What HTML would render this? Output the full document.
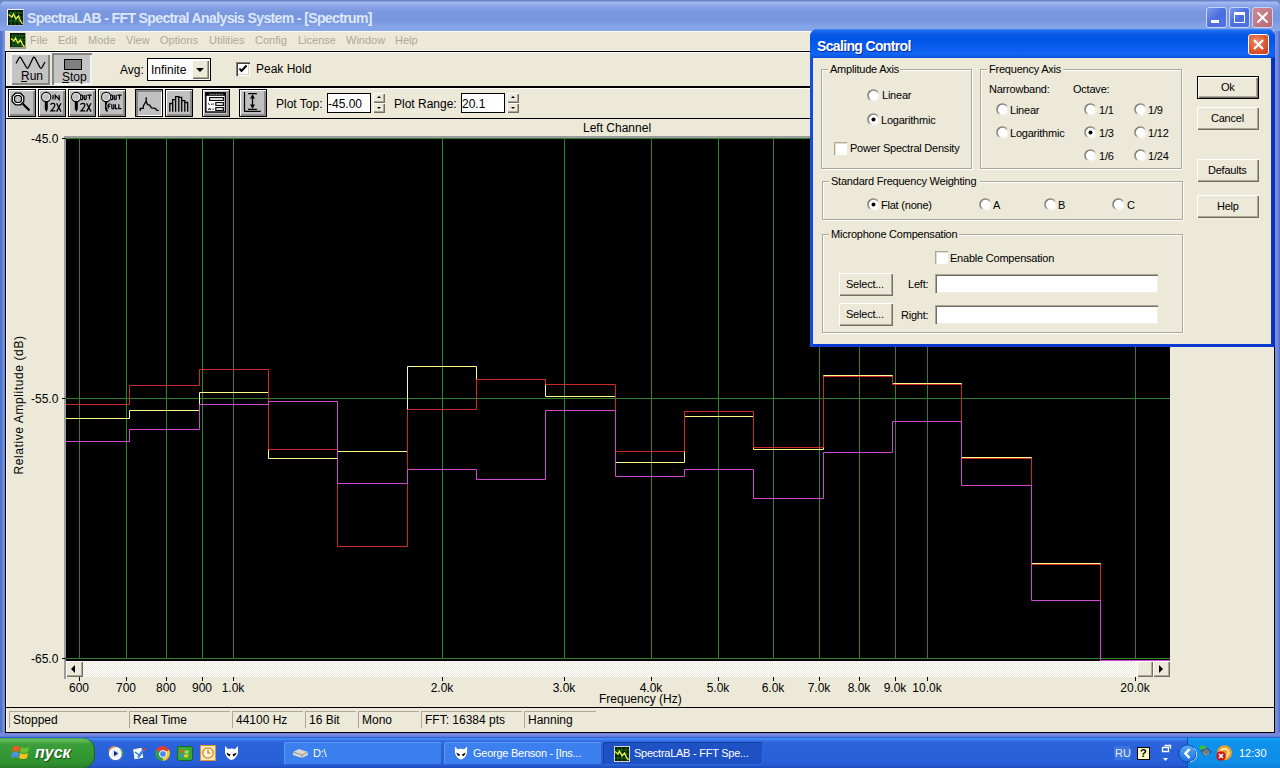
<!DOCTYPE html>
<html><head><meta charset="utf-8">
<style>
*{margin:0;padding:0;box-sizing:border-box}
html,body{width:1280px;height:768px;overflow:hidden;background:#6688c4;font-family:"Liberation Sans",sans-serif;font-size:11px;color:#000}
.a{position:absolute}
.t{position:absolute;white-space:nowrap;line-height:1}
#frame{left:0;top:0;width:1280px;height:738px;background:#7d9ce0;border-radius:7px 7px 0 0}
#title{left:0;top:0;width:1280px;height:31px;border-radius:7px 7px 0 0;background:linear-gradient(#6a82c8 0,#6a82c8 1px,#a4baf0 2px,#98b0ee 4px,#8aa4e8 6px,#7a98e0 12px,#7896de 20px,#84a2e6 26px,#88a8ea 31px)}
#client{left:5px;top:31px;width:1269px;height:701px;background:#ece9d8}
.tb{position:absolute;width:21px;height:21px;border-radius:3px;border:1px solid #c8d4f8;background:linear-gradient(135deg,#7c98ec,#4a6ee0 50%,#5274e0)}
.menu{color:#aca899;font-size:11px;top:35px}
.btn{position:absolute;background:#c0c0c0;border:1px solid #000;box-shadow:inset 1px 1px 0 #fff,inset -2px -2px 0 #8a8a8a}
.face{position:absolute;background:#c6c6c6;box-shadow:inset 1px 1px 0 #f4f4f4,inset -2px -2px 0 #8c8c8c}
.hl{position:absolute;height:1px}
.vl{position:absolute;width:1px}
.d{font-size:11px;letter-spacing:-0.22px}
.tk{font-size:11px;color:#fff;letter-spacing:-0.25px}
</style></head><body>
<div id="frame" class="a"></div>
<div id="title" class="a"></div>
<!-- app icon -->
<svg class="a" style="left:7px;top:9px" width="17" height="17" viewBox="0 0 17 17">
<rect x="0.5" y="0.5" width="16" height="16" fill="#0a1a08" stroke="#a8b4d0"/><path d="M0.5 16.5V0.5H16.5" stroke="#f0f4fc" fill="none"/>
<path d="M4 2V16M8 2V16M12 2V16M2 4H16M2 8H16M2 12H16" stroke="#1a8a1a" stroke-width="0.7"/>
<path d="M1.5 5.5L5 8L6.5 5L9 10L11.5 7L13.5 12L15.5 15" stroke="#e4f040" stroke-width="1.3" fill="none"/>
</svg>
<div class="t" style="left:27px;top:11px;font-size:14px;font-weight:bold;color:#dfe8fa;letter-spacing:-0.62px">SpectraLAB - FFT Spectral Analysis System - [Spectrum]</div>
<div class="tb" style="left:1206px;top:7px"></div>
<div class="a" style="left:1211px;top:20px;width:8px;height:3px;background:#fff"></div>
<div class="tb" style="left:1229px;top:7px"></div>
<div class="a" style="left:1234px;top:12px;width:11px;height:11px;border:1px solid #fff;border-top-width:3px"></div>
<div class="tb" style="left:1252px;top:7px;background:linear-gradient(135deg,#d08890,#b86878)"></div>
<svg class="a" style="left:1252px;top:7px" width="21" height="21" viewBox="0 0 21 21"><path d="M5.5 5.5L15.5 15.5M15.5 5.5L5.5 15.5" stroke="#fff" stroke-width="2"/></svg>
<div class="a" style="left:0;top:31px;width:5px;height:707px;background:linear-gradient(90deg,#4a76c8 0,#4c78cc 2px,#7a8ae0 3px,#7c8ce0 5px)"></div>
<div class="a" style="left:1275px;top:31px;width:5px;height:707px;background:linear-gradient(90deg,#7c8ce0 0,#7486dc 3px,#4a76c8 4px,#4a76c8 5px)"></div>
<div class="a" style="left:0;top:732px;width:1280px;height:6px;background:linear-gradient(#6c80d8,#7a8ae0 3px,#4a6ac0 6px)"></div>
<div id="client" class="a"></div>
<div class="a" style="left:5px;top:51px;width:1px;height:682px;background:#000"></div>
<div class="a" style="left:6px;top:52px;width:1px;height:680px;background:#fbfbf6"></div>
<div class="a" style="left:1274px;top:51px;width:1px;height:682px;background:#000"></div>

<!-- menu bar -->
<div class="a" style="left:5px;top:31px;width:1269px;height:1px;background:#fbfbf7"></div>
<svg class="a" style="left:10px;top:33px" width="16" height="16" viewBox="0 0 16 16">
<rect x="0" y="0" width="16" height="16" fill="#9c9c94"/>
<rect x="0" y="0" width="15" height="14" fill="#0a1a08"/>
<path d="M3 1V14M6 1V14M9 1V14M12 1V14M1 3H15M1 6H15M1 9H15M1 12H15" stroke="#1a8a1a" stroke-width="0.7"/>
<path d="M1 5.5L4 8L5.5 5L8 10L10.5 7L12.5 11.5L14.5 14" stroke="#e4f040" stroke-width="1.3" fill="none"/>
</svg>
<div class="t menu" style="left:30px">File</div>
<div class="t menu" style="left:58px">Edit</div>
<div class="t menu" style="left:88px">Mode</div>
<div class="t menu" style="left:126px">View</div>
<div class="t menu" style="left:160px">Options</div>
<div class="t menu" style="left:209px">Utilities</div>
<div class="t menu" style="left:255px">Config</div>
<div class="t menu" style="left:298px">License</div>
<div class="t menu" style="left:346px">Window</div>
<div class="t menu" style="left:395px">Help</div>
<!-- toolbar 1 -->
<div class="a" style="left:5px;top:50px;width:1269px;height:1px;background:#f4f4ee"></div>
<div class="a" style="left:5px;top:51px;width:1269px;height:1px;background:#000"></div>

<div class="a" style="left:6px;top:52px;width:1268px;height:1px;background:#fff"></div>
<div class="a" style="left:6px;top:52px;width:1px;height:34px;background:#fff"></div>
<div class="a" style="left:10px;top:53px;width:40px;height:32px;background:#c4c4c4;box-shadow:inset 2px 2px 0 #f2f2ee,inset -2px -2px 0 #858585"></div>
<svg class="a" style="left:10px;top:53px" width="40" height="32" viewBox="0 0 40 32">
<path d="M6 10.5L9 5Q10 3.5 11 5L16.5 14.5Q17.5 16 18.5 14.5L23 5Q24 3.5 25 5L30 14.5Q31 16 32 14.5L35 9" stroke="#000" stroke-width="1.3" fill="none"/>
</svg>
<div class="t" style="left:21px;top:70px;font-size:12px">Run</div>
<div class="a" style="left:21px;top:81px;width:6px;height:1px;background:#000"></div>
<div class="a" style="left:52px;top:53px;width:40px;height:32px;background:#c4c4c4;box-shadow:inset 2px 2px 0 #858585,inset -2px -2px 0 #f2f2ee"></div>
<div class="a" style="left:64px;top:59px;width:18px;height:11px;background:#808080;border:1px solid #000"></div>
<div class="t" style="left:62px;top:71px;font-size:12px">Stop</div>
<div class="a" style="left:62px;top:82px;width:7px;height:1px;background:#000"></div>
<div class="t" style="left:120px;top:64px;font-size:12px">Avg:</div>
<div class="a" style="left:147px;top:58px;width:64px;height:23px;background:#fff;border:1px solid #000"></div>
<div class="t" style="left:151px;top:63.5px;font-size:12px">Infinite</div>
<div class="a" style="left:192px;top:60px;width:17px;height:19px;background:#ece9d8;box-shadow:inset 1px 1px 0 #fff,inset -1px -1px 0 #716f64,inset -2px -2px 0 #aca899"></div>
<div class="a" style="left:196px;top:68px;width:0;height:0;border-left:4px solid transparent;border-right:4px solid transparent;border-top:4px solid #000"></div>
<div class="a" style="left:236px;top:62px;width:14px;height:14px;background:#fff;box-shadow:inset 1px 1px 0 #808080,inset 2px 2px 0 #404040,inset -1px -1px 0 #fff,inset -2px -2px 0 #d4d0c8"></div>
<svg class="a" style="left:236px;top:62px" width="14" height="14" viewBox="0 0 14 14"><path d="M3.5 6.5L5.5 9L10.5 3.5" stroke="#000" stroke-width="2" fill="none"/></svg>
<div class="t" style="left:256px;top:63px;font-size:12px">Peak Hold</div>
<!-- toolbar 2 -->
<div class="a" style="left:5px;top:86px;width:1269px;height:2px;background:#000"></div>
<div class="a" style="left:5px;top:118px;width:1269px;height:1px;background:#000"></div>
<div class="a" style="left:6px;top:88px;width:1268px;height:1px;background:#fff"></div>
<div class="a" style="left:6px;top:88px;width:1px;height:30px;background:#fff"></div>

<!-- toolbar 2 buttons -->
<div class="btn" style="left:8px;top:89px;width:28px;height:28px"></div>
<svg class="a" style="left:8px;top:89px" width="28" height="28" viewBox="0 0 28 28">
<path d="M7.5 4.2H12.5L15.8 7.5V12.5L12.5 15.8H7.5L4.2 12.5V7.5Z" fill="#fff" stroke="#000" stroke-width="1.3"/>
<path d="M8.3 6.5H11.7L13.5 8.3V11.7L11.7 13.5H8.3L6.5 11.7V8.3Z" fill="#c0c0c0" stroke="#000" stroke-width="1.2"/>
<path d="M14.5 14.5L21.5 21.5" stroke="#000" stroke-width="2.2"/></svg>
<div class="btn" style="left:38px;top:89px;width:28px;height:28px"></div>
<svg class="a" style="left:38px;top:89px" width="28" height="28" viewBox="0 0 28 28">
<circle cx="8.2" cy="8" r="3.9" fill="#c0c0c0" stroke="#fff" stroke-width="1.3"/><circle cx="8.2" cy="8" r="4.6" fill="none" stroke="#000" stroke-width="1.1"/>
<path d="M6.8 13H9.8V20L8.3 23L6.8 20Z" fill="#000"/>
<path d="M15 6V10.6M17.2 10.6V6L21.2 10.6V6" stroke="#000" stroke-width="1.2" fill="none"/>
<path d="M12.6 15.8Q13 14.4 14.8 14.4Q16.8 14.4 16.8 16.2Q16.8 17.6 13 21.9H17.4M18.6 14.2L23 22.6M23 14.2L18.6 22.6" stroke="#000" stroke-width="1.3" fill="none"/></svg>
<div class="btn" style="left:68px;top:89px;width:28px;height:28px"></div>
<svg class="a" style="left:68px;top:89px" width="28" height="28" viewBox="0 0 28 28">
<circle cx="8.2" cy="8" r="3.9" fill="#c0c0c0" stroke="#fff" stroke-width="1.3"/><circle cx="8.2" cy="8" r="4.6" fill="none" stroke="#000" stroke-width="1.1"/>
<path d="M6.8 13H9.8V20L8.3 23L6.8 20Z" fill="#000"/>
<path d="M12.6 6.2H13.8Q14.8 6.2 14.8 8.4Q14.8 10.6 13.8 10.6H12.6M16.2 6V9.8Q16.2 10.6 17.2 10.6Q18.2 10.6 18.2 9.8V6M19.4 6.2H23.6M21.5 6.2V10.6" stroke="#000" stroke-width="1.2" fill="none"/>
<path d="M12.6 15.8Q13 14.4 14.8 14.4Q16.8 14.4 16.8 16.2Q16.8 17.6 13 21.9H17.4M18.6 14.2L23 22.6M23 14.2L18.6 22.6" stroke="#000" stroke-width="1.3" fill="none"/></svg>
<div class="btn" style="left:98px;top:89px;width:28px;height:28px"></div>
<svg class="a" style="left:98px;top:89px" width="28" height="28" viewBox="0 0 28 28">
<circle cx="8.2" cy="8" r="3.9" fill="#c0c0c0" stroke="#fff" stroke-width="1.3"/><circle cx="8.2" cy="8" r="4.6" fill="none" stroke="#000" stroke-width="1.1"/>
<path d="M7 13H9.5L8.6 15.5Q8 17 9 19.5L10 22.5H8L7 19.5Z" fill="#000"/>
<path d="M12.6 6.2H13.8Q14.8 6.2 14.8 8.4Q14.8 10.6 13.8 10.6H12.6M16.2 6V9.8Q16.2 10.6 17.2 10.6Q18.2 10.6 18.2 9.8V6M19.4 6.2H23.6M21.5 6.2V10.6" stroke="#000" stroke-width="1.2" fill="none"/>
<path d="M10.2 15.2H12.6M10.2 15.2V19.8M10.2 17.3H12M13.8 15.2V19Q13.8 19.8 14.8 19.8Q15.8 19.8 15.8 19V15.2M17.4 15.2V19.6H19.6M20.8 15.2V19.6H23.4" stroke="#000" stroke-width="1.2" fill="none"/></svg>
<div class="a" style="left:135px;top:89px;width:28px;height:28px;background:#c0c0c0;border:1px solid #000;box-shadow:inset 2px 2px 0 #858585,inset -1px -1px 0 #fff"></div>
<svg class="a" style="left:135px;top:89px" width="28" height="28" viewBox="0 0 28 28">
<path d="M5.3 22V19.3H8.2V17.4L9.6 14.5L11.1 12.6L11.3 8.2M11.3 12.6L12.5 15.5L14.9 16.4L16.4 18.9L20.3 19.3L21.7 21.3H23.7" stroke="#000" stroke-width="1.3" fill="none"/></svg>
<div class="btn" style="left:165px;top:89px;width:28px;height:28px"></div>
<svg class="a" style="left:165px;top:89px" width="28" height="28" viewBox="0 0 28 28">
<path d="M4.8 22.7V14.5M7.7 22.7V10.6M10.6 22.7V7.7M13.8 22.7V7.7M16.7 22.7V8.4M19.8 22.7V11.6M22.7 22.7V13.5M4.2 14.5H8.3M7.1000000000000005 10.6H11.2M10.0 7.7H14.4M13.200000000000001 8.4H17.3M16.099999999999998 11.6H20.400000000000002M19.2 13.5H23.3" stroke="#000" stroke-width="1.3" fill="none"/></svg>
<div class="btn" style="left:202px;top:89px;width:28px;height:28px"></div>
<svg class="a" style="left:202px;top:89px" width="28" height="28" viewBox="0 0 28 28">
<rect x="3.8" y="3.8" width="19.6" height="19.2" fill="#fff" stroke="#000" stroke-width="1.4"/>
<rect x="3.8" y="3.8" width="19.6" height="3" fill="#000"/>
<path d="M7.5 5.3H21" stroke="#fff" stroke-width="0.8" stroke-dasharray="1 0.6"/>
<rect x="7.6" y="8.6" width="13.8" height="2.8" fill="none" stroke="#000" stroke-width="1.1"/>
<rect x="13.8" y="13.6" width="7.6" height="2.8" fill="none" stroke="#000" stroke-width="1.1"/>
<rect x="13.8" y="18.6" width="7.6" height="2.8" fill="none" stroke="#000" stroke-width="1.1"/>
<path d="M6 14.5L7.5 15.5M9 15.2H10.5M11.5 14.5V15.5M6 20.5L7.5 19.5L9 20.5M11 19.5V20.8" stroke="#000" stroke-width="1"/></svg>
<div class="btn" style="left:239px;top:89px;width:28px;height:28px"></div>
<svg class="a" style="left:239px;top:89px" width="28" height="28" viewBox="0 0 28 28">
<path d="M5.5 3V22.4H21.8" stroke="#000" stroke-width="1.2" fill="none"/>
<path d="M9.1 4.6H17.9M9.1 20.3H17.9M13.5 6V19" stroke="#000" stroke-width="1.2" fill="none"/>
<path d="M11 9.5L13.5 5.5L16 9.5ZM11 15.5L13.5 19.5L16 15.5Z" fill="#000"/></svg>
<div class="t" style="left:276px;top:98px;font-size:12px">Plot Top:</div>
<div class="a" style="left:327px;top:93px;width:44px;height:20px;background:#fff;border:1px solid #000"></div>
<div class="t" style="left:328px;top:98px;font-size:12px">-45.00</div>
<div class="a" style="left:373px;top:93px;width:12px;height:10px;background:#ece9d8;box-shadow:inset 1px 1px 0 #fff,inset -1px -1px 0 #716f64,inset -2px -2px 0 #aca899"></div>
<div class="a" style="left:373px;top:103px;width:12px;height:10px;background:#ece9d8;box-shadow:inset 1px 1px 0 #fff,inset -1px -1px 0 #716f64,inset -2px -2px 0 #aca899"></div>
<div class="a" style="left:377px;top:96px;border-left:2px solid transparent;border-right:2px solid transparent;border-bottom:2px solid #000"></div>
<div class="a" style="left:377px;top:107px;border-left:2px solid transparent;border-right:2px solid transparent;border-top:2px solid #000"></div>
<div class="t" style="left:394px;top:98px;font-size:12px">Plot Range:</div>
<div class="a" style="left:461px;top:93px;width:44px;height:20px;background:#fff;border:1px solid #000"></div>
<div class="t" style="left:462px;top:98px;font-size:12px">20.1</div>
<div class="a" style="left:507px;top:93px;width:12px;height:10px;background:#ece9d8;box-shadow:inset 1px 1px 0 #fff,inset -1px -1px 0 #716f64,inset -2px -2px 0 #aca899"></div>
<div class="a" style="left:507px;top:103px;width:12px;height:10px;background:#ece9d8;box-shadow:inset 1px 1px 0 #fff,inset -1px -1px 0 #716f64,inset -2px -2px 0 #aca899"></div>
<div class="a" style="left:511px;top:96px;border-left:2px solid transparent;border-right:2px solid transparent;border-bottom:2px solid #000"></div>
<div class="a" style="left:511px;top:107px;border-left:2px solid transparent;border-right:2px solid transparent;border-top:2px solid #000"></div>

<!-- plot -->
<div class="t" style="left:583px;top:122px;font-size:12px">Left Channel</div>
<div class="a" style="left:64px;top:136px;width:1106px;height:2px;background:#9c9c9c"></div>
<div class="a" style="left:64px;top:136px;width:2px;height:543px;background:#9c9c9c"></div>
<div class="a" style="left:66px;top:138px;width:1104px;height:523px;background:#000"></div>
<svg class="a" style="left:0;top:0" width="1280" height="768">
<path d="M79.5 138V659M126.5 138V659M166.5 138V659M202.5 138V659M233.5 138V659M442.5 138V659M564.5 138V659M651.5 138V659M718.5 138V659M773.5 138V659M819.5 138V659M859.5 138V659M895.5 138V659M927.5 138V659M1135.5 138V659M66 138.5H1170M66 398.5H1170M66 658.5H1170" stroke="#2c8230" stroke-width="1" fill="none"/>
<path d="M62 138.5H66M62 398.5H66M62 658.5H66" stroke="#000" stroke-width="1"/>
<path d="M66 418.5H129.5V410.5H199.5V392.5H268.5V458.5H337.5V451.5H407.5V366.5H476.5V379.5H545.5V396.5H615.5V462.5H684.5V416.5H753.5V449.5H823.5V375.5H892.5V383.5H961.5V457.5H1031.5V563.5H1100.5V660.5H1170" stroke="#ffff88" stroke-width="1" fill="none"/>
<path d="M66 404.5H129.5V385.5H199.5V369.5H268.5V449.5H337.5V546.5H407.5V409.5H476.5V379.5H545.5V384.5H615.5V451.5H684.5V411.5H753.5V447.5H823.5V376.5H892.5V384.5H961.5V458.5H1031.5V564.5H1100.5V660.5H1170" stroke="#cc2a26" stroke-width="1" fill="none"/>
<path d="M66 441.5H129.5V429.5H199.5V404.5H268.5V401.5H337.5V483.5H407.5V469.5H476.5V479.5H545.5V410.5H615.5V476.5H684.5V469.5H753.5V498.5H823.5V452.5H892.5V421.5H961.5V485.5H1031.5V600.5H1100.5V660.5H1170" stroke="#d048d0" stroke-width="1" fill="none"/>
</svg>

<!-- axes -->
<div class="t" style="left:31px;top:133px;font-size:12px">-45.0</div>
<div class="t" style="left:31px;top:393px;font-size:12px">-55.0</div>
<div class="t" style="left:31px;top:653px;font-size:12px">-65.0</div>
<div class="t" style="left:19px;top:405px;font-size:12px;letter-spacing:0.6px;transform:translate(-50%,-50%) rotate(-90deg);transform-origin:center">Relative Amplitude (dB)</div>
<div class="a" style="left:66px;top:661px;width:1104px;height:16px;background:repeating-conic-gradient(#fff 0 25%,#ebe9de 0 50%) 0 0/2px 2px"></div>
<div class="a" style="left:66px;top:661px;width:17px;height:16px;background:#ece9d8;box-shadow:inset 1px 1px 0 #fff,inset -1px -1px 0 #716f64,inset -2px -2px 0 #aca899"></div>
<div class="a" style="left:71px;top:665px;border-top:4px solid transparent;border-bottom:4px solid transparent;border-right:4px solid #000"></div>
<div class="a" style="left:1137px;top:661px;width:16px;height:16px;background:#ece9d8;box-shadow:inset 1px 1px 0 #fff,inset -1px -1px 0 #716f64,inset -2px -2px 0 #aca899"></div>
<div class="a" style="left:1153px;top:661px;width:17px;height:16px;background:#ece9d8;box-shadow:inset 1px 1px 0 #fff,inset -1px -1px 0 #716f64,inset -2px -2px 0 #aca899"></div>
<div class="a" style="left:1159px;top:665px;border-top:4px solid transparent;border-bottom:4px solid transparent;border-left:4px solid #000"></div>
<svg class="a" style="left:0;top:0" width="1280" height="768"><path d="M79.5 677V681M126.5 677V681M166.5 677V681M202.5 677V681M233.5 677V681M442.5 677V681M564.5 677V681M651.5 677V681M718.5 677V681M773.5 677V681M819.5 677V681M859.5 677V681M895.5 677V681M927.5 677V681M1135.5 677V681" stroke="#000" stroke-width="1"/></svg>
<div class="t" style="left:79px;top:682px;font-size:12px;transform:translateX(-50%)">600</div>
<div class="t" style="left:126px;top:682px;font-size:12px;transform:translateX(-50%)">700</div>
<div class="t" style="left:166px;top:682px;font-size:12px;transform:translateX(-50%)">800</div>
<div class="t" style="left:202px;top:682px;font-size:12px;transform:translateX(-50%)">900</div>
<div class="t" style="left:233px;top:682px;font-size:12px;transform:translateX(-50%)">1.0k</div>
<div class="t" style="left:442px;top:682px;font-size:12px;transform:translateX(-50%)">2.0k</div>
<div class="t" style="left:564px;top:682px;font-size:12px;transform:translateX(-50%)">3.0k</div>
<div class="t" style="left:651px;top:682px;font-size:12px;transform:translateX(-50%)">4.0k</div>
<div class="t" style="left:718px;top:682px;font-size:12px;transform:translateX(-50%)">5.0k</div>
<div class="t" style="left:773px;top:682px;font-size:12px;transform:translateX(-50%)">6.0k</div>
<div class="t" style="left:819px;top:682px;font-size:12px;transform:translateX(-50%)">7.0k</div>
<div class="t" style="left:859px;top:682px;font-size:12px;transform:translateX(-50%)">8.0k</div>
<div class="t" style="left:895px;top:682px;font-size:12px;transform:translateX(-50%)">9.0k</div>
<div class="t" style="left:927px;top:682px;font-size:12px;transform:translateX(-50%)">10.0k</div>
<div class="t" style="left:1135px;top:682px;font-size:12px;transform:translateX(-50%)">20.0k</div>
<div class="t" style="left:599px;top:693px;font-size:12px">Frequency (Hz)</div>
<!-- status -->
<div class="a" style="left:5px;top:707px;width:1269px;height:1px;background:#000"></div>
<div class="a" style="left:5px;top:732px;width:1269px;height:1px;background:#000"></div>
<div class="a" style="left:5px;top:707px;width:1px;height:26px;background:#000"></div>
<div class="a" style="left:9px;top:711px;width:118px;height:17px;border-left:1px solid #aca899;border-top:1px solid #aca899"></div>
<div class="t" style="left:13px;top:714px;font-size:12px">Stopped</div>
<div class="a" style="left:129px;top:711px;width:101px;height:17px;border-left:1px solid #aca899;border-top:1px solid #aca899"></div>
<div class="t" style="left:133px;top:714px;font-size:12px">Real Time</div>
<div class="a" style="left:232px;top:711px;width:71px;height:17px;border-left:1px solid #aca899;border-top:1px solid #aca899"></div>
<div class="t" style="left:236px;top:714px;font-size:12px">44100 Hz</div>
<div class="a" style="left:305px;top:711px;width:51px;height:17px;border-left:1px solid #aca899;border-top:1px solid #aca899"></div>
<div class="t" style="left:309px;top:714px;font-size:12px">16 Bit</div>
<div class="a" style="left:358px;top:711px;width:61px;height:17px;border-left:1px solid #aca899;border-top:1px solid #aca899"></div>
<div class="t" style="left:362px;top:714px;font-size:12px">Mono</div>
<div class="a" style="left:421px;top:711px;width:101px;height:17px;border-left:1px solid #aca899;border-top:1px solid #aca899"></div>
<div class="t" style="left:425px;top:714px;font-size:12px">FFT: 16384 pts</div>
<div class="a" style="left:524px;top:711px;width:72px;height:17px;border-left:1px solid #aca899;border-top:1px solid #aca899"></div>
<div class="t" style="left:528px;top:714px;font-size:12px">Hanning</div>

<!-- dialog -->
<svg width="0" height="0" style="position:absolute"><defs><linearGradient id="rg" x1="0" y1="0" x2="1" y2="1"><stop offset="0" stop-color="#6e6e66"/><stop offset="0.45" stop-color="#9a998e"/><stop offset="0.6" stop-color="#e6e4da"/><stop offset="1" stop-color="#fff"/></linearGradient></defs></svg>
<div class="a" style="left:810px;top:29px;width:465px;height:318px;background:linear-gradient(90deg,#1a50e8,#0a3ad0 6px,#0a3ad0 calc(100% - 6px),#0830b8);border-radius:8px 8px 0 0"></div>
<div class="a" style="left:810px;top:29px;width:465px;height:29px;border-radius:8px 8px 0 0;background:linear-gradient(#3c8cf6 0,#1a68ee 2px,#0a5ae8 5px,#0055e5 10px,#0a5df0 20px,#1366f4 25px,#0a4fd8 29px)"></div>
<div class="a" style="left:813px;top:58px;width:458px;height:286px;background:#ece9d8"></div>
<div class="t" style="left:817px;top:38.5px;font-size:14px;font-weight:bold;color:#fff;letter-spacing:-0.65px;text-shadow:1px 1px 0 #0a2a9a">Scaling Control</div>
<div class="a" style="left:1248px;top:34px;width:21px;height:21px;border-radius:3px;border:1px solid #fff;background:radial-gradient(circle at 40% 35%,#f09070,#d8532c 60%,#c0401c)"></div>
<svg class="a" style="left:1248px;top:34px" width="21" height="21" viewBox="0 0 21 21"><path d="M6 6L15 15M15 6L6 15" stroke="#fff" stroke-width="2.2"/></svg>
<div class="a" style="left:821px;top:69px;width:151px;height:100px;border:1px solid #aca899;box-shadow:inset 1px 1px 0 #fff,1px 1px 0 #fff"></div>
<div class="a" style="left:828px;top:66px;width:72px;height:7px;background:#ece9d8"></div>
<div class="t d" style="left:830px;top:64.2px">Amplitude Axis</div>
<svg class="a" style="left:867px;top:89px" width="13" height="13" viewBox="0 0 13 13"><defs></defs><circle cx="6.5" cy="6.5" r="5.5" fill="#fff" stroke="url(#rg)" stroke-width="1.6"/></svg>
<div class="t d" style="left:882px;top:90.2px">Linear</div>
<svg class="a" style="left:867px;top:113px" width="13" height="13" viewBox="0 0 13 13"><defs></defs><circle cx="6.5" cy="6.5" r="5.5" fill="#fff" stroke="url(#rg)" stroke-width="1.6"/><circle cx="6.5" cy="6.5" r="2" fill="#000"/></svg>
<div class="t d" style="left:881px;top:114.7px">Logarithmic</div>
<div class="a" style="left:834px;top:142px;width:13px;height:13px;background:#fff;box-shadow:inset 1px 1px 0 #aca899,inset 2px 2px 0 #e0ded2"></div>
<div class="t d" style="left:850px;top:142.7px">Power Spectral Density</div>
<div class="a" style="left:980px;top:69px;width:202px;height:100px;border:1px solid #aca899;box-shadow:inset 1px 1px 0 #fff,1px 1px 0 #fff"></div>
<div class="a" style="left:987px;top:66px;width:76px;height:7px;background:#ece9d8"></div>
<div class="t d" style="left:989px;top:64.2px">Frequency Axis</div>
<div class="t d" style="left:989px;top:83.7px">Narrowband:</div>
<div class="t d" style="left:1073px;top:83.7px">Octave:</div>
<svg class="a" style="left:996px;top:103px" width="13" height="13" viewBox="0 0 13 13"><defs></defs><circle cx="6.5" cy="6.5" r="5.5" fill="#fff" stroke="url(#rg)" stroke-width="1.6"/></svg>
<div class="t d" style="left:1010px;top:104.7px">Linear</div>
<svg class="a" style="left:996px;top:126px" width="13" height="13" viewBox="0 0 13 13"><defs></defs><circle cx="6.5" cy="6.5" r="5.5" fill="#fff" stroke="url(#rg)" stroke-width="1.6"/></svg>
<div class="t d" style="left:1010px;top:127.7px">Logarithmic</div>
<svg class="a" style="left:1084px;top:103px" width="13" height="13" viewBox="0 0 13 13"><defs></defs><circle cx="6.5" cy="6.5" r="5.5" fill="#fff" stroke="url(#rg)" stroke-width="1.6"/></svg>
<div class="t d" style="left:1099px;top:104.7px">1/1</div>
<svg class="a" style="left:1084px;top:126px" width="13" height="13" viewBox="0 0 13 13"><defs></defs><circle cx="6.5" cy="6.5" r="5.5" fill="#fff" stroke="url(#rg)" stroke-width="1.6"/><circle cx="6.5" cy="6.5" r="2" fill="#000"/></svg>
<div class="t d" style="left:1099px;top:127.7px">1/3</div>
<svg class="a" style="left:1084px;top:149px" width="13" height="13" viewBox="0 0 13 13"><defs></defs><circle cx="6.5" cy="6.5" r="5.5" fill="#fff" stroke="url(#rg)" stroke-width="1.6"/></svg>
<div class="t d" style="left:1099px;top:150.7px">1/6</div>
<svg class="a" style="left:1134px;top:103px" width="13" height="13" viewBox="0 0 13 13"><defs></defs><circle cx="6.5" cy="6.5" r="5.5" fill="#fff" stroke="url(#rg)" stroke-width="1.6"/></svg>
<div class="t d" style="left:1148px;top:104.7px">1/9</div>
<svg class="a" style="left:1134px;top:126px" width="13" height="13" viewBox="0 0 13 13"><defs></defs><circle cx="6.5" cy="6.5" r="5.5" fill="#fff" stroke="url(#rg)" stroke-width="1.6"/></svg>
<div class="t d" style="left:1148px;top:127.7px">1/12</div>
<svg class="a" style="left:1134px;top:149px" width="13" height="13" viewBox="0 0 13 13"><defs></defs><circle cx="6.5" cy="6.5" r="5.5" fill="#fff" stroke="url(#rg)" stroke-width="1.6"/></svg>
<div class="t d" style="left:1148px;top:150.7px">1/24</div>
<div class="a" style="left:822px;top:181px;width:361px;height:39px;border:1px solid #aca899;box-shadow:inset 1px 1px 0 #fff,1px 1px 0 #fff"></div>
<div class="a" style="left:829px;top:178px;width:151px;height:7px;background:#ece9d8"></div>
<div class="t d" style="left:831px;top:176px">Standard Frequency Weighting</div>
<svg class="a" style="left:867px;top:198px" width="13" height="13" viewBox="0 0 13 13"><defs></defs><circle cx="6.5" cy="6.5" r="5.5" fill="#fff" stroke="url(#rg)" stroke-width="1.6"/><circle cx="6.5" cy="6.5" r="2" fill="#000"/></svg>
<div class="t d" style="left:881px;top:199.7px">Flat (none)</div>
<svg class="a" style="left:979px;top:198px" width="13" height="13" viewBox="0 0 13 13"><defs></defs><circle cx="6.5" cy="6.5" r="5.5" fill="#fff" stroke="url(#rg)" stroke-width="1.6"/></svg>
<div class="t d" style="left:993px;top:199.7px">A</div>
<svg class="a" style="left:1044px;top:198px" width="13" height="13" viewBox="0 0 13 13"><defs></defs><circle cx="6.5" cy="6.5" r="5.5" fill="#fff" stroke="url(#rg)" stroke-width="1.6"/></svg>
<div class="t d" style="left:1058px;top:199.7px">B</div>
<svg class="a" style="left:1112px;top:198px" width="13" height="13" viewBox="0 0 13 13"><defs></defs><circle cx="6.5" cy="6.5" r="5.5" fill="#fff" stroke="url(#rg)" stroke-width="1.6"/></svg>
<div class="t d" style="left:1127px;top:199.7px">C</div>
<div class="a" style="left:822px;top:234px;width:361px;height:99px;border:1px solid #aca899;box-shadow:inset 1px 1px 0 #fff,1px 1px 0 #fff"></div>
<div class="a" style="left:829px;top:231px;width:130px;height:7px;background:#ece9d8"></div>
<div class="t d" style="left:831px;top:229px">Microphone Compensation</div>
<div class="a" style="left:935px;top:251px;width:13px;height:13px;background:#fff;box-shadow:inset 1px 1px 0 #aca899,inset 2px 2px 0 #e0ded2"></div>
<div class="t d" style="left:950px;top:252.7px">Enable Compensation</div>
<div class="a" style="left:839px;top:273px;width:54px;height:23px;background:#ece9d8;box-shadow:inset 1px 1px 0 #fff,inset -1px -1px 0 #716f64,inset -2px -2px 0 #aca899"></div>
<div class="t d" style="left:846px;top:278.7px">Select...</div>
<div class="a" style="left:839px;top:303px;width:54px;height:23px;background:#ece9d8;box-shadow:inset 1px 1px 0 #fff,inset -1px -1px 0 #716f64,inset -2px -2px 0 #aca899"></div>
<div class="t d" style="left:846px;top:308.7px">Select...</div>
<div class="t d" style="left:908px;top:278.7px">Left:</div>
<div class="t d" style="left:901px;top:309.7px">Right:</div>
<div class="a" style="left:935px;top:274px;width:223px;height:19px;background:#fff;box-shadow:inset 1px 1px 0 #aca899,inset 2px 2px 0 #716f64,inset -1px -1px 0 #f1efe2"></div>
<div class="a" style="left:935px;top:305px;width:223px;height:19px;background:#fff;box-shadow:inset 1px 1px 0 #aca899,inset 2px 2px 0 #716f64,inset -1px -1px 0 #f1efe2"></div>
<div class="a" style="left:1197px;top:76px;width:62px;height:23px;background:#ece9d8;border:1px solid #000;box-shadow:inset 1px 1px 0 #fff,inset -1px -1px 0 #716f64,inset -2px -2px 0 #aca899"></div>
<div class="t d" style="left:1221px;top:81.7px">Ok</div>
<div class="a" style="left:1197px;top:107px;width:62px;height:23px;background:#ece9d8;box-shadow:inset 1px 1px 0 #fff,inset -1px -1px 0 #716f64,inset -2px -2px 0 #aca899"></div>
<div class="t d" style="left:1211px;top:112.7px">Cancel</div>
<div class="a" style="left:1197px;top:159px;width:62px;height:23px;background:#ece9d8;box-shadow:inset 1px 1px 0 #fff,inset -1px -1px 0 #716f64,inset -2px -2px 0 #aca899"></div>
<div class="t d" style="left:1208px;top:164.7px">Defaults</div>
<div class="a" style="left:1197px;top:195px;width:62px;height:23px;background:#ece9d8;box-shadow:inset 1px 1px 0 #fff,inset -1px -1px 0 #716f64,inset -2px -2px 0 #aca899"></div>
<div class="t d" style="left:1217px;top:200.7px">Help</div>

<!-- taskbar -->
<div class="a" style="left:0;top:737px;width:1280px;height:31px;background:linear-gradient(#1f4fc8 0,#3a7cf0 1px,#4d8cf4 2px,#2f6ae0 4px,#2a62dc 8px,#2860da 24px,#2458d0 29px,#1c48b8 31px)"></div>
<div class="a" style="left:1187px;top:738px;width:93px;height:30px;background:linear-gradient(#14a2f4 0,#0f92ec 4px,#0e8ee8 24px,#0c80da 30px);border-left:1px solid #0a5fc8"></div>
<div class="a" style="left:0;top:738px;width:95px;height:30px;border-radius:0 12px 12px 0;background:linear-gradient(#4ea84e 0,#63bf5f 2px,#3c9e3c 6px,#339a33 15px,#2f922f 24px,#2a802a 30px);box-shadow:inset -1px 0 1px #1d5a1d"></div>
<svg class="a" style="left:11px;top:744px" width="19" height="18" viewBox="0 0 19 18">
<path d="M2 3Q5 1 9 3L8 8Q5 6 1 8Z" fill="#f05a22"/>
<path d="M10 3Q13 5 18 3L17 8Q13 10 9 8Z" fill="#6cc030"/>
<path d="M1 9Q5 7 8 9L7 14Q4 12 0 14Z" fill="#4a90e8"/>
<path d="M9 9Q13 11 17 9L16 14Q12 16 8 14Z" fill="#f8c020"/>
</svg>
<div class="t" style="left:35px;top:745px;font-size:16px;font-weight:bold;font-style:italic;color:#fff;text-shadow:1px 1px 1px #1a4a1a">пуск</div>
<!-- quick launch -->
<svg class="a" style="left:107px;top:745px" width="17" height="17" viewBox="0 0 17 17">
<circle cx="8.5" cy="8.5" r="7.3" fill="#fff" stroke="#3a6ad0" stroke-width="1.4"/>
<path d="M2 6A7 7 0 0 1 8 1.5" stroke="#f08a30" stroke-width="1.6" fill="none"/><path d="M14 4A7 7 0 0 1 15 10" stroke="#50b040" stroke-width="1.6" fill="none"/>
<circle cx="8.5" cy="8.5" r="4" fill="#dfe8ff"/><path d="M7 5.8L11.2 8.5L7 11.2Z" fill="#1a2a80"/></svg>
<svg class="a" style="left:131px;top:745px" width="16" height="17" viewBox="0 0 16 17">
<path d="M1.5 4L11 2L13 13L3 15Z" fill="#f4f8ff" stroke="#2a5ab8" stroke-width="1.2"/>
<path d="M4 7L8 10L12 5" stroke="#2a6ad8" stroke-width="1.2" fill="none"/>
<path d="M6 12L13 3L14.5 4.5L8 13Z" fill="#3a80e8"/><circle cx="13.5" cy="4" r="1.3" fill="#e04020"/></svg>
<div class="a" style="left:155px;top:746px;width:15px;height:15px;border-radius:50%;background:conic-gradient(from -60deg,#e04030 0 120deg,#f8c820 120deg 240deg,#30a050 240deg 360deg)"></div>
<div class="a" style="left:158.5px;top:749.5px;width:8px;height:8px;border-radius:50%;background:#4a8af0;border:1.5px solid #fff"></div>
<svg class="a" style="left:177px;top:746px" width="16" height="15" viewBox="0 0 16 15">
<rect x="0.5" y="0.5" width="15" height="14" rx="2" fill="#3aa838" stroke="#1a6a1a"/>
<path d="M4 4Q5 3 7 4L6.5 7Q5 6 3.5 7Z" fill="#f05a22"/><path d="M8 4Q10 5 12 4L11.5 7Q10 8 7.5 7Z" fill="#a0e060"/>
<path d="M3.5 8Q5 7 6.5 8L6 11Q5 10 3 11Z" fill="#4a90e8"/><path d="M7.5 8Q10 9 11.5 8L11 11Q9 12 7 11Z" fill="#f8d020"/></svg>
<svg class="a" style="left:200px;top:745px" width="16" height="16" viewBox="0 0 16 16">
<rect x="0.5" y="0.5" width="15" height="15" fill="#fbe8c0" stroke="#e89030"/>
<circle cx="8" cy="8" r="5.2" fill="#fff4d8" stroke="#d08010" stroke-width="1.2"/>
<path d="M8 4.5V8H10.5" stroke="#c07010" stroke-width="1.2" fill="none"/></svg>
<svg class="a" style="left:224px;top:745px" width="15" height="16" viewBox="0 0 15 16"><path d="M1 1L4 4Q7.5 3 11 4L14 1L14 8Q12 14 7.5 15Q3 14 1 8Z" fill="#fff"/><path d="M2.5 7.5L6.5 9.5L5.5 11.5Q3 10.5 2.5 7.5ZM12.5 7.5L8.5 9.5L9.5 11.5Q12 10.5 12.5 7.5Z" fill="#000"/></svg>
<!-- task buttons -->
<div class="a" style="left:284px;top:742px;width:158px;height:23px;border-radius:3px;background:#3c80f0;box-shadow:inset 1px 1px 0 #5a98f8,inset -1px -1px 0 #2a60d0"></div>
<svg class="a" style="left:292px;top:747px" width="17" height="13" viewBox="0 0 17 13"><path d="M1 5L7 2L16 5L16 8L10 11L1 8Z" fill="#d8d8d0"/><path d="M1 5L10 8L16 5M10 8V11" stroke="#808080" fill="none" stroke-width="0.8"/></svg>
<div class="t tk" style="left:313px;top:748px">D:\</div>
<div class="a" style="left:444px;top:742px;width:158px;height:23px;border-radius:3px;background:#3c80f0;box-shadow:inset 1px 1px 0 #5a98f8,inset -1px -1px 0 #2a60d0"></div>
<svg class="a" style="left:454px;top:745px" width="14" height="16" viewBox="0 0 15 16"><path d="M1 1L4 4Q7.5 3 11 4L14 1L14 8Q12 14 7.5 15Q3 14 1 8Z" fill="#fff"/><path d="M2.5 7.5L6.5 9.5L5.5 11.5Q3 10.5 2.5 7.5ZM12.5 7.5L8.5 9.5L9.5 11.5Q12 10.5 12.5 7.5Z" fill="#000"/></svg>
<div class="t tk" style="left:473px;top:748px">George Benson - [Ins...</div>
<div class="a" style="left:603px;top:742px;width:160px;height:23px;border-radius:3px;background:#1e52c4;box-shadow:inset 1px 1px 0 #16409e,inset -1px -1px 0 #3068d8"></div>
<svg class="a" style="left:614px;top:746px" width="16" height="16" viewBox="0 0 16 16">
<rect x="0.5" y="0.5" width="15" height="15" fill="#0a1a08" stroke="#d0d8c8"/>
<path d="M4 1V15M8 1V15M12 1V15M1 4H15M1 8H15M1 12H15" stroke="#1a8a1a" stroke-width="0.7"/>
<path d="M1 5.5L4 8L5.5 5L8 10L10.5 7L12.5 11.5L14.5 14" stroke="#e4f040" stroke-width="1.3" fill="none"/></svg>
<div class="t tk" style="left:634px;top:748px">SpectraLAB - FFT Spe...</div>
<!-- tray -->
<div class="a" style="left:1114px;top:746px;width:16px;height:14px;background:#3a74e0"></div>
<div class="t" style="left:1115px;top:748px;font-size:11px;color:#e8eef8">RU</div>
<div class="a" style="left:1137px;top:747px;width:13px;height:13px;background:#fff8c0;border:1px solid #000"></div>
<div class="t" style="left:1140px;top:748px;font-size:11px;font-weight:bold">?</div>
<svg class="a" style="left:1160px;top:743px" width="14" height="20" viewBox="0 0 14 20">
<path d="M4.5 2.5H10.5V5.5M2.5 4.5H8.5V8.5H2.5Z" stroke="#fff" stroke-width="1.3" fill="none"/>
<path d="M3 15H8L5.5 18Z" fill="#fff"/></svg>
<div class="a" style="left:1187px;top:738px;width:1px;height:30px;background:#1050b0"></div>
<svg class="a" style="left:1178px;top:744px" width="20" height="20" viewBox="0 0 20 20">
<defs><linearGradient id="rb" x1="0" y1="0" x2="0" y2="1"><stop offset="0" stop-color="#5aaaf8"/><stop offset="1" stop-color="#1a70e0"/></linearGradient></defs>
<circle cx="9.5" cy="9.5" r="8.6" fill="url(#rb)" stroke="#0c3a9a" stroke-width="0.8"/>
<path d="M16 4A8 8 0 0 1 12 18" stroke="#b8dcff" stroke-width="1" fill="none"/>
<path d="M11.5 5L7.5 9.5L11.5 14" stroke="#fff" stroke-width="2.6" fill="none"/></svg>
<svg class="a" style="left:1198px;top:744px" width="16" height="16" viewBox="0 0 16 16">
<path d="M3 7L7 12L13 8L9 4Z" fill="#6a7888" stroke="#303840" stroke-width="0.8"/>
<path d="M5 8.5L7.5 11.5L11 9" stroke="#c0c8d0" stroke-width="0.8" fill="none"/>
<path d="M1 3L4 0.5V2H8V5H4V6.5Z" fill="#3cc030"/></svg>
<svg class="a" style="left:1215px;top:744px" width="18" height="18" viewBox="0 0 18 18">
<circle cx="9.5" cy="8.8" r="7.5" fill="#f4a020"/><circle cx="9.5" cy="8.8" r="5" fill="#fde8b0"/><circle cx="9.5" cy="8.8" r="3" fill="#f4a020"/>
<circle cx="6" cy="12" r="4.8" fill="#c81818"/><path d="M4 10L8 14M8 10L4 14" stroke="#fff" stroke-width="1.6"/></svg>
<div class="t" style="left:1239px;top:748px;font-size:11px;color:#fff">12:30</div>
</body></html>
